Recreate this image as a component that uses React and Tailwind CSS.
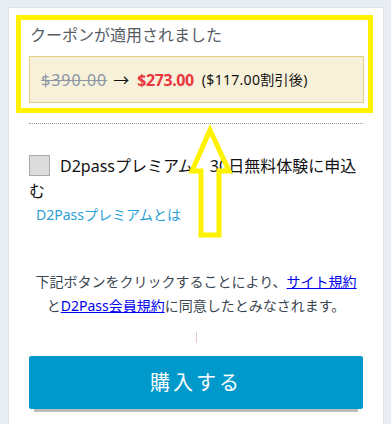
import React from "react";

export default function App() {
  const font = { fontFamily: '"Noto Sans", "Noto Sans CJK JP", sans-serif' };
  return (
    <div
      className="relative w-[391px] h-[424px] overflow-hidden bg-[#e9edf4] pt-[7px] pl-[8px] pr-[7px]"
      style={font}
    >
      <div className="h-[440px] bg-white border border-[#dde2ea]">
        {/* highlighted coupon area */}
        <div className="mt-[7px] ml-[7px] mr-[10px] border-[5px] border-[#fff200] pl-[8px] pr-[4px] pt-[3px] pb-[5px]">
          <div className="h-[24px] leading-[24px] text-[16px] text-[#555b63] pl-[1px]">
            クーポンが適用されました
          </div>
          <div className="mt-[9px] h-[47px] border border-[#e3cf86] bg-[#f8f1da] flex items-center pl-[11px] whitespace-nowrap">
            <span className="text-[16px] text-[#8a96a3] line-through tracking-[1px]">$390.00</span>
            <span className="text-[16px] text-[#111] ml-[6px]">→</span>
            <span className="text-[16px] font-bold text-[#e8373e] ml-[8px] tracking-[-0.4px]">$273.00</span>
            <span className="text-[14px] text-[#111] ml-[8px] tracking-[0.3px]">($117.00割引後)</span>
          </div>
        </div>

        <div className="mx-[20px] mt-[10px] border-t border-dotted border-[#9a9a9a]" />

        <div className="mx-[20px] mt-[30px] text-[16px] leading-[25px] text-[#111]">
          <span className="inline-block align-[-4px] w-[21px] h-[21px] bg-[#dcdcdc] border border-[#a9a9a9] mr-[10px]" />
          D2passプレミアム　30日無料体験に申込む
        </div>
        <div className="mx-[27px] mt-[-1px] text-[14px] leading-[24px] text-[#2a9fd6]">
          D2Passプレミアムとは
        </div>

        <div className="mx-[20px] mt-[43px] text-center text-[14px] leading-[24px] text-[#3b4650]">
          下記ボタンをクリックすることにより、
          <span className="text-[#0000ee] underline">サイト規約</span>
          <br />と<span className="text-[#0000ee] underline">D2Pass会員規約</span>
          に同意したとみなされます。
        </div>

        <div className="mt-[14px] flex justify-center">
          <div className="w-[1px] h-[11px] bg-[#e6c9c9]" />
        </div>

        <div className="mx-[20px] mt-[13px] h-[53px] bg-[#0099cc] rounded-[2px] flex items-center justify-center text-white text-[20px] tracking-[3px] shadow-[0_8px_0_-5px_#bdbdbd]">
          購入する
        </div>
      </div>

      {/* annotation arrow */}
      <svg
        className="absolute left-0 top-0 pointer-events-none"
        width="391"
        height="424"
        viewBox="0 0 391 424"
      >
        <polygon
          points="210,130 192,171 201,171 201,235 219,235 219,171 229,171"
          fill="none"
          stroke="#fff200"
          strokeWidth="5"
          strokeLinejoin="miter"
        />
      </svg>
    </div>
  );
}
